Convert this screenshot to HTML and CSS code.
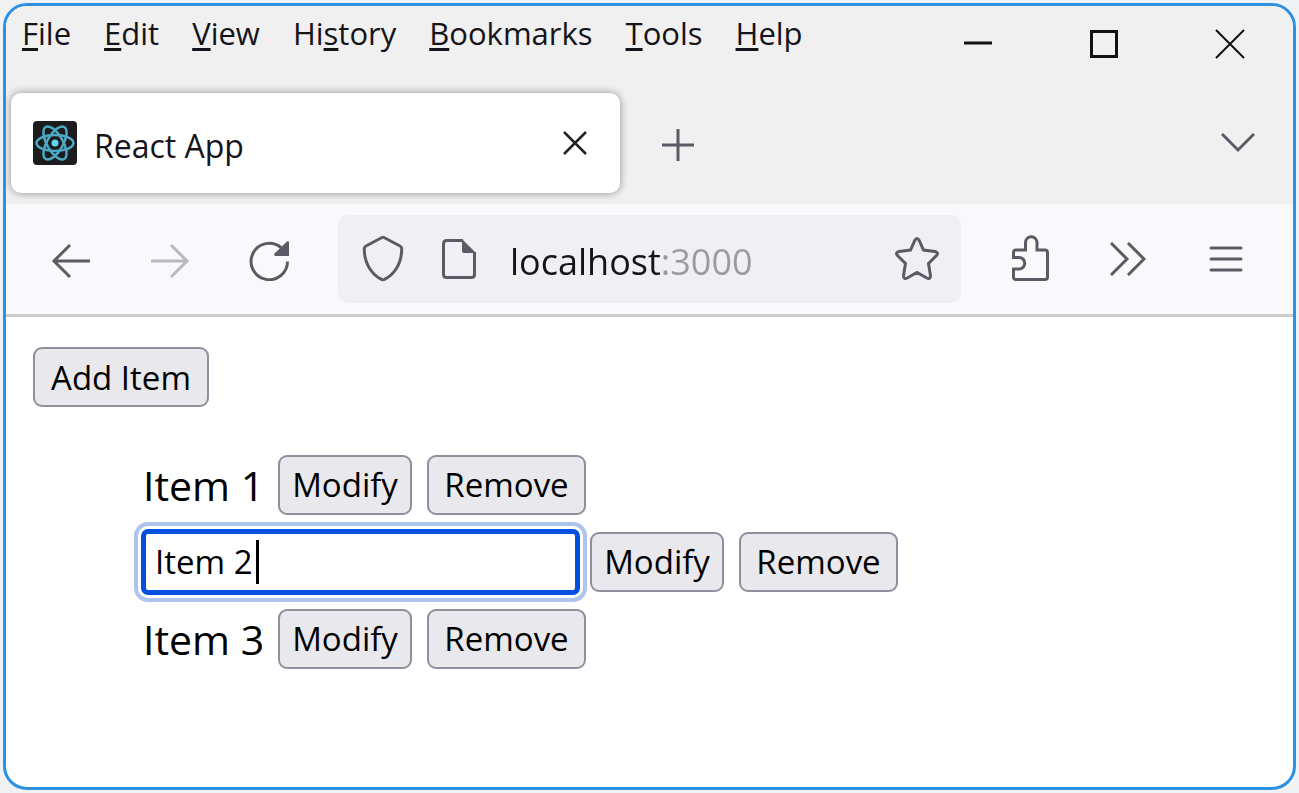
FILE: index.html
```html
<!DOCTYPE html>
<html lang="en">
  <head>
    <meta charset="utf-8" />
    <meta name="viewport" content="width=device-width, initial-scale=1.0" />
    <title>React App</title>
    <link rel="stylesheet" href="styles.css">
  </head>
  <body>
    <div class="window">
      <header class="titlebar">
        <nav class="menu">
          <button type="button"><u>F</u>ile</button>
          <button type="button"><u>E</u>dit</button>
          <button type="button"><u>V</u>iew</button>
          <button type="button">Hi<u>s</u>tory</button>
          <button type="button"><u>B</u>ookmarks</button>
          <button type="button"><u>T</u>ools</button>
          <button type="button"><u>H</u>elp</button>
        </nav>
        <div class="controls">
          <button type="button" aria-label="Minimize">
            <svg width="30" height="30" viewBox="0 0 30 30"><path d="M1 14h28" stroke-width="3" /></svg>
          </button>
          <button type="button" aria-label="Maximize">
            <svg width="30" height="30" viewBox="0 0 30 30"><path d="M2.500 2.500h25v25h-25z" stroke-width="3" /></svg>
          </button>
          <button type="button" aria-label="Close">
            <svg width="30" height="30" viewBox="0 0 30 30"><path d="M1 1l28 28M29 1L1 29" stroke-width="2" /></svg>
          </button>
        </div>
      </header>

      <div class="tabs">
        <div class="tab">
          <svg class="favicon" width="44" height="44" viewBox="0 0 44 44">
            <rect width="44" height="44" rx="4" fill="#1c1c1f" />
            <g fill="none" stroke="#4ba9c4" stroke-width="2.500">
              <ellipse cx="22" cy="22" rx="18.500" ry="8" />
              <ellipse cx="22" cy="22" rx="18.500" ry="8" transform="rotate(60 22 22)" />
              <ellipse cx="22" cy="22" rx="18.500" ry="8" transform="rotate(120 22 22)" />
            </g>
            <circle cx="22" cy="22" r="3.500" fill="#5fd3f0" />
          </svg>
          <span class="tab-title">React App</span>
          <button type="button" class="tab-close" aria-label="Close tab">
            <svg width="24" height="24" viewBox="0 0 24 24"><path d="M1 1l22 22M23 1L1 23" stroke-width="2.500" /></svg>
          </button>
        </div>
        <button type="button" class="new-tab" aria-label="New tab">
          <svg width="34" height="34" viewBox="0 0 34 34"><path d="M17 1v32M1 17h32" stroke-width="3" /></svg>
        </button>
        <button type="button" class="all-tabs" aria-label="List all tabs">
          <svg width="34" height="20" viewBox="0 0 34 20"><path d="M1 1l16 16L33 1" stroke-width="3" /></svg>
        </button>
      </div>

      <div class="toolbar">
        <div class="nav history">
          <button type="button" aria-label="Back">
            <svg width="40" height="34" viewBox="0 0 40 34"><path d="M39 17H2M19 1L3 17l16 16" stroke-width="3" /></svg>
          </button>
          <button type="button" aria-label="Forward" disabled>
            <svg width="40" height="34" viewBox="0 0 40 34"><path d="M1 17h37M21 1l16 16-16 16" stroke-width="3" /></svg>
          </button>
          <button type="button" aria-label="Reload">
            <svg width="40" height="40" viewBox="0 0 40 40">
              <path d="M38.500 20.500A18.200 18.200 0 1 1 32 6.500" stroke-width="3" />
              <path class="solid" d="M40 1v14H26q-1.500-1-.5-2.500L38 .5q1.500-.5 2 .5z" />
            </svg>
          </button>
        </div>
        <div class="urlbar">
          <svg width="50" height="50" viewBox="0 0 50 50"><path d="M24 3.500Q25 3 26 3.500L42 12Q44 13 43.700 15.500C43.500 31 35 41.500 26.500 45.300Q25 46 23.500 45.300C15 41.500 6.500 31 6.300 15.500Q6 13 8 12Z" stroke-width="3" /></svg>
          <svg width="50" height="50" viewBox="0 0 50 50">
            <path d="M29 6.500H13Q9.500 6.500 9.500 10V40.500Q9.500 43.500 13 43.500H37Q40.500 43.500 40.500 40.500V18" stroke-width="3" />
            <path class="solid" d="M28 5l14 14H30Q28 19 28 17z" />
          </svg>
          <input type="text" class="address" aria-label="Address" value="localhost:3000" />
          <button type="button" aria-label="Bookmark this page">
            <svg width="50" height="50" viewBox="0 0 50 50"><path d="M22.800 6.500Q25 2.500 27.200 6.500L31.500 16L43 17.500Q47 18.500 44.500 21.500L36.500 29.500L38.500 41.500Q38.500 45.800 34.800 44L25 38.500L15.200 44Q11.500 45.800 11.500 41.500L13.500 29.500L5.500 21.500Q3 18.500 7 17.500L18.500 16Z" stroke-width="3" /></svg>
          </button>
        </div>
        <div class="nav tools">
          <button type="button" aria-label="Extensions">
            <svg width="50" height="50" viewBox="0 0 50 50"><path d="M11 16Q8.500 16 8.500 18.500V23.500H14A5.500 5.500 0 0 1 14 35H8.500V43Q8.500 45.500 11 45.500H40Q42.500 45.500 42.500 43V18.500Q42.500 16 40 16H32V8.500A5.500 5.500 0 0 0 20.500 8.500V16Z" stroke-width="3" /></svg>
          </button>
          <button type="button" aria-label="More tools">
            <svg width="36" height="34" viewBox="0 0 36 34"><path d="M1 1l16 16L1 33M18 1l16 16-16 16" stroke-width="3" /></svg>
          </button>
          <button type="button" aria-label="Application menu">
            <svg width="34" height="28" viewBox="0 0 34 28"><path d="M2 3h30M2 14h30M2 25h30" stroke-width="3" stroke-linecap="round" /></svg>
          </button>
        </div>
      </div>

      <main class="page">
        <button type="button" class="btn add">Add Item</button>
        <ul class="items">
          <li>
            <span class="name">Item 1</span>
            <button type="button" class="btn modify">Modify</button>
            <button type="button" class="btn remove">Remove</button>
          </li>
          <li>
            <div class="field">
              <input type="text" class="edit" aria-label="Item name" value="Item 2" />
              <span class="caret"></span>
            </div>
            <button type="button" class="btn modify">Modify</button>
            <button type="button" class="btn remove">Remove</button>
          </li>
          <li>
            <span class="name">Item 3</span>
            <button type="button" class="btn modify">Modify</button>
            <button type="button" class="btn remove">Remove</button>
          </li>
        </ul>
      </main>
    </div>
  </body>
</html>
```
FILE: styles.css
```css
* {
  box-sizing: border-box;
}
body {
  margin: 0;
  padding: 3px;
  height: 100vh;
  background-color: #f0f2f4;
  color: #15141a;
  font-family: "Open Sans", "Noto Sans", sans-serif;
  font-size: 32px;
}
button,
input {
  margin: 0;
  padding: 0;
  border: none;
  background: none;
  color: inherit;
  font: inherit;
}
button {
  display: flex;
  align-items: center;
  justify-content: center;
}
svg {
  display: block;
  flex: none;
  fill: none;
  stroke: #5b5b66;
}
.solid {
  fill: #5b5b66;
  stroke: none;
}
.window {
  display: flex;
  flex-direction: column;
  height: 100%;
  overflow: hidden;
  border: 3px solid #2e90e0;
  border-radius: 24px;
  background-color: #fff;
}

/* menu and window buttons */
.titlebar {
  display: flex;
  justify-content: space-between;
  height: 84px;
  background-color: #f0f0f0;
}
.menu {
  display: flex;
  align-items: flex-start;
  gap: 33px;
  padding: 5px 0 0 16px;
  font-size: 31px;
}
.menu button {
  line-height: 44px;
}
.menu u {
  text-decoration-thickness: 3px;
  text-underline-offset: 3px;
  text-decoration-skip-ink: none;
}
.controls {
  display: flex;
  height: 76px;
}
.controls button {
  width: 126px;
}
.controls svg {
  stroke: #111;
}

/* tabs */
.tabs {
  display: flex;
  align-items: center;
  padding: 3px 15px 11px 5px;
  background-color: #f0f0f0;
}
.tab {
  display: flex;
  align-items: center;
  gap: 17px;
  width: 609px;
  height: 100px;
  padding: 0 15px 0 22px;
  border-radius: 10px;
  background-color: #fff;
  box-shadow: 0 0 8px rgba(0, 0, 0, 0.4);
}
.favicon {
  stroke: none;
}
.tab-title {
  flex: 1;
  padding-top: 4px;
}
.tab-close {
  width: 60px;
  height: 60px;
}
.tab-close svg {
  stroke: #222;
}
.new-tab,
.all-tabs {
  width: 80px;
  height: 80px;
}
.new-tab {
  margin-left: 18px;
  padding-top: 4px;
}
.all-tabs {
  margin-left: auto;
}

/* navigation and address */
.toolbar {
  display: flex;
  gap: 20px;
  padding: 11px 18px 11px 15px;
  border-bottom: 3px solid #ccc;
  background-color: #f9f9fb;
}
.nav {
  display: flex;
}
.history button {
  width: 99px;
  padding-top: 4px;
}
.tools button {
  width: 98px;
}
.nav button:disabled {
  opacity: 0.4;
}
.urlbar {
  display: flex;
  flex: 1;
  align-items: center;
  gap: 26px;
  min-width: 0;
  height: 88px;
  padding: 0 19px 0 20px;
  border-radius: 10px;
  background-color: #f0f0f4;
}
/* the port is drawn lighter than the host */
.address {
  flex: 1;
  min-width: 0;
  padding-top: 4px;
  font-size: 36px;
  background-image: linear-gradient(90deg, #15141a 150px, #9a9aa2 150px);
  -webkit-background-clip: text;
  background-clip: text;
  -webkit-text-fill-color: transparent;
}

/* page */
.page {
  flex: 1;
  padding: 30px 27px;
  color: #000;
  font-size: 33px;
}
.btn {
  height: 60px;
  border: 2px solid #8f8f9d;
  border-radius: 9px;
  background-color: #e9e9ed;
}
.add {
  width: 176px;
}
.modify {
  width: 134px;
}
.remove {
  width: 159px;
}
.items {
  margin: 39px 0 0;
  padding: 0 0 0 108px;
  list-style: none;
}
.items li {
  display: flex;
  align-items: center;
  gap: 15px;
  height: 77px;
}
.name {
  width: 122px;
  padding-left: 2px;
  font-size: 41px;
  white-space: nowrap;
}
.field {
  position: relative;
  width: 439px;
  margin-right: -5px;
}
.edit {
  width: 100%;
  height: 66px;
  padding: 0 9px;
  border: 5px solid #0250e0;
  border-radius: 7px;
  outline: 4px solid #adc5ee;
  outline-offset: 3px;
  background-color: #fff;
}
.caret {
  position: absolute;
  left: 115px;
  top: 11px;
  width: 3px;
  height: 44px;
  background-color: #000;
}
```
